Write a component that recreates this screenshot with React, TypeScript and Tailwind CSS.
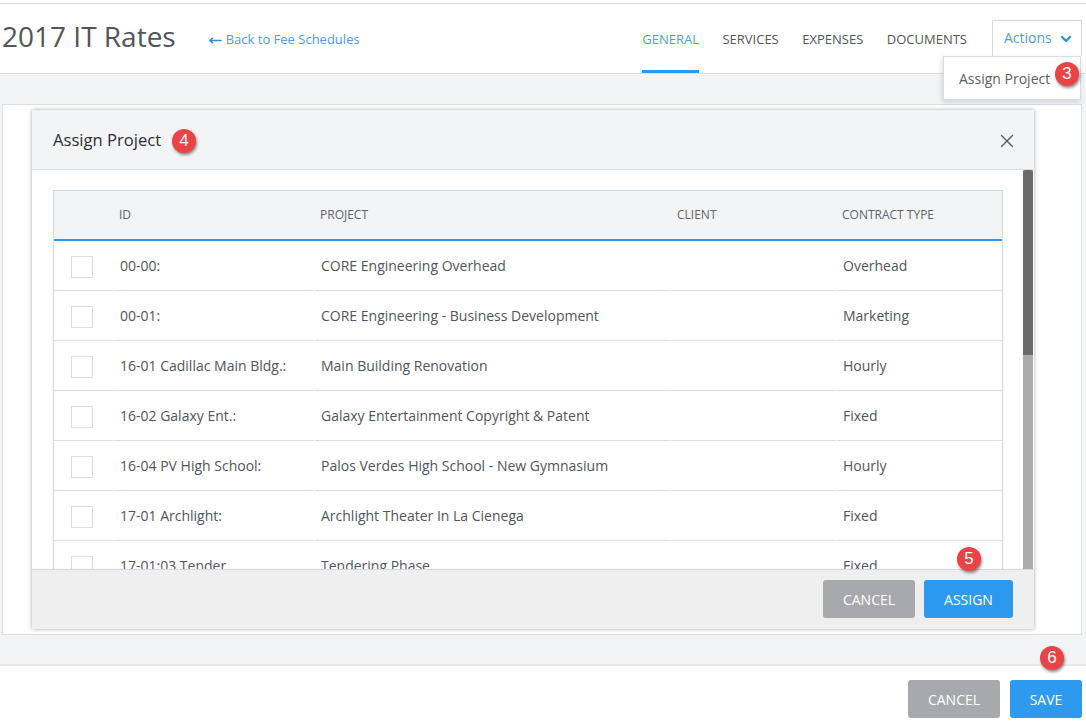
import { ChevronDown, MoveLeft, X } from "lucide-react";

const rows = [
  { id: "00-00:", project: "CORE Engineering Overhead", type: "Overhead" },
  { id: "00-01:", project: "CORE Engineering - Business Development", type: "Marketing" },
  { id: "16-01 Cadillac Main Bldg.:", project: "Main Building Renovation", type: "Hourly" },
  { id: "16-02 Galaxy Ent.:", project: "Galaxy Entertainment Copyright & Patent", type: "Fixed" },
  { id: "16-04 PV High School:", project: "Palos Verdes High School - New Gymnasium", type: "Hourly" },
  { id: "17-01 Archlight:", project: "Archlight Theater In La Cienega", type: "Fixed" },
  { id: "17-01:03 Tender", project: "Tendering Phase", type: "Fixed" },
];

const tabs = ["GENERAL", "SERVICES", "EXPENSES", "DOCUMENTS"];

// Red numbered callout laid over the screenshot
const Badge = ({ n, className }: { n: number; className: string }) => (
  <div
    className={`absolute z-30 flex h-[24px] w-[24px] items-center justify-center rounded-full bg-[#e94345] text-[17px] text-white shadow-[1px_2px_3px_rgba(0,0,0,0.45)] ${className}`}
    style={{ fontFamily: '"Liberation Sans", sans-serif' }}
  >
    {n}
  </div>
);

const App = () => {
  return (
    <div className="relative flex h-[725px] w-[1086px] flex-col overflow-hidden bg-white font-['Open_Sans',sans-serif] text-[#4a4f55]">
      <div className="h-[3px] bg-white" />
      <header className="flex h-[71px] items-stretch justify-between border-y border-[#d8dde3] bg-white">
        <div className="flex items-center">
          <h1 className="ml-[2px] mt-[-5px] text-[28px] leading-[40px] text-[#50555a]">2017 IT Rates</h1>
          <a className="ml-[33px] mt-[3px] flex items-center text-[13px] text-[#4b9cf0]">
            <MoveLeft className="mr-[4px] h-[13px] w-[13px] text-[#2d8fe0]" strokeWidth={3} />
            Back to Fee Schedules
          </a>
        </div>
        <div className="flex items-stretch">
          <nav className="flex gap-[23.5px]">
            {tabs.map((t) => (
              <a
                key={t}
                className={`flex items-center border-b-[3px] pt-[6px] text-[13px] ${
                  t === "GENERAL" ? "border-[#2d9af0] text-[#4b9cf0]" : "border-transparent text-[#50555a]"
                }`}
              >
                {t}
              </a>
            ))}
          </nav>
          <div className="ml-[25px] mr-[4px] mt-[16px] flex h-[36px] w-[90px] items-center border border-b-0 border-[#d0dae3] pb-[3px] pl-[11px] text-[14px] text-[#4b9cf0]">
            Actions
            <ChevronDown className="ml-[6px] mt-[3px] h-[16px] w-[16px] text-[#2d8fe0]" strokeWidth={3.5} />
          </div>
        </div>
      </header>

      <main className="relative flex-1 bg-[#f3f4f5] px-[2px] pb-[29px] pt-[30px]">
        <div className="h-full w-[1080px] border border-[#d8dde8] bg-white" />

        <div className="absolute left-[32px] top-[36px] z-10 flex h-[519px] w-[1002px] flex-col bg-white shadow-[0_0_4px_rgba(0,0,0,0.35)]">
          <div className="flex h-[60px] items-center justify-between border-b border-[#d8dde3] bg-[#f3f4f6] pl-[21px] pr-[16px]">
            <span className="mt-[2px] text-[16.6px] text-[#2c2f33]">Assign Project</span>
            <X className="mt-[2px] h-[22px] w-[22px] text-[#55595e]" strokeWidth={1.5} />
          </div>

          <div className="flex min-h-0 flex-1">
            <div className="min-h-0 flex-1 overflow-hidden pl-[21px] pr-[20px] pt-[20px]">
              <div className="border-x border-t border-[#d0dae3]">
                <div className="grid h-[50px] grid-cols-[65px_201px_357px_165px_1fr] items-center border-b-2 border-[#2d9af0] bg-[#f3f4f6] text-[12px] text-[#5f6368]">
                  <div />
                  <div>ID</div>
                  <div>PROJECT</div>
                  <div>CLIENT</div>
                  <div>CONTRACT TYPE</div>
                </div>
                {rows.map((r) => (
                  <div
                    key={r.id}
                    className="grid h-[50px] grid-cols-[59px_200px_355px_165px_1fr] gap-x-px text-[14px] text-[#50555a]"
                  >
                    <div className="flex items-center border-b border-[#d8dde8] pl-[17px]">
                      <span className="mt-[3px] h-[22px] w-[22px] border border-[#d8dde8] bg-white" />
                    </div>
                    <div className="flex items-center border-b border-[#d8dde8] pl-[6px]">{r.id}</div>
                    <div className="flex items-center border-b border-[#d8dde8] pl-[6px]">{r.project}</div>
                    <div className="border-b border-[#d8dde8]" />
                    <div className="flex items-center border-b border-[#d8dde8] pl-[6px]">{r.type}</div>
                  </div>
                ))}
              </div>
            </div>
            <div className="mr-px flex w-[10px] flex-col bg-[#ababab]">
              <div className="h-[185px] rounded-t-[3px] bg-[#6b6b6b]" />
            </div>
          </div>

          <div className="flex h-[60px] items-center justify-end gap-[9px] border-t border-[#d4d8de] bg-[#efefef] pb-[1px] pr-[21px]">
            <button className="h-[38px] w-[92px] rounded-[3px] bg-[#a7a9ac] text-[14px] text-white">CANCEL</button>
            <button className="h-[38px] w-[89px] rounded-[3px] bg-[#2d9af0] text-[14px] text-white">ASSIGN</button>
          </div>
        </div>
      </main>

      <footer className="flex h-[61px] items-start justify-end gap-[10px] border-t-2 border-[#e6e8ea] bg-white pr-[4px] pt-[14px]">
        <button className="h-[38px] w-[92px] rounded-[3px] bg-[#a7a9ac] text-[14px] text-white">CANCEL</button>
        <button className="h-[38px] w-[72px] rounded-[3px] bg-[#2d9af0] text-[14px] text-white">SAVE</button>
      </footer>

      <div className="absolute left-[943px] top-[56px] z-20 flex h-[44px] w-[138px] items-center border border-[#d8dde3] bg-white pl-[15px] text-[14px] text-[#5a5e63] shadow-[-1px_2px_5px_rgba(0,0,0,0.15)]">
        Assign Project
      </div>

      <Badge n={3} className="left-[1055px] top-[62px]" />
      <Badge n={4} className="left-[172px] top-[129px]" />
      <Badge n={5} className="left-[957px] top-[547px]" />
      <Badge n={6} className="left-[1040px] top-[646px]" />
    </div>
  );
};

export default App;
